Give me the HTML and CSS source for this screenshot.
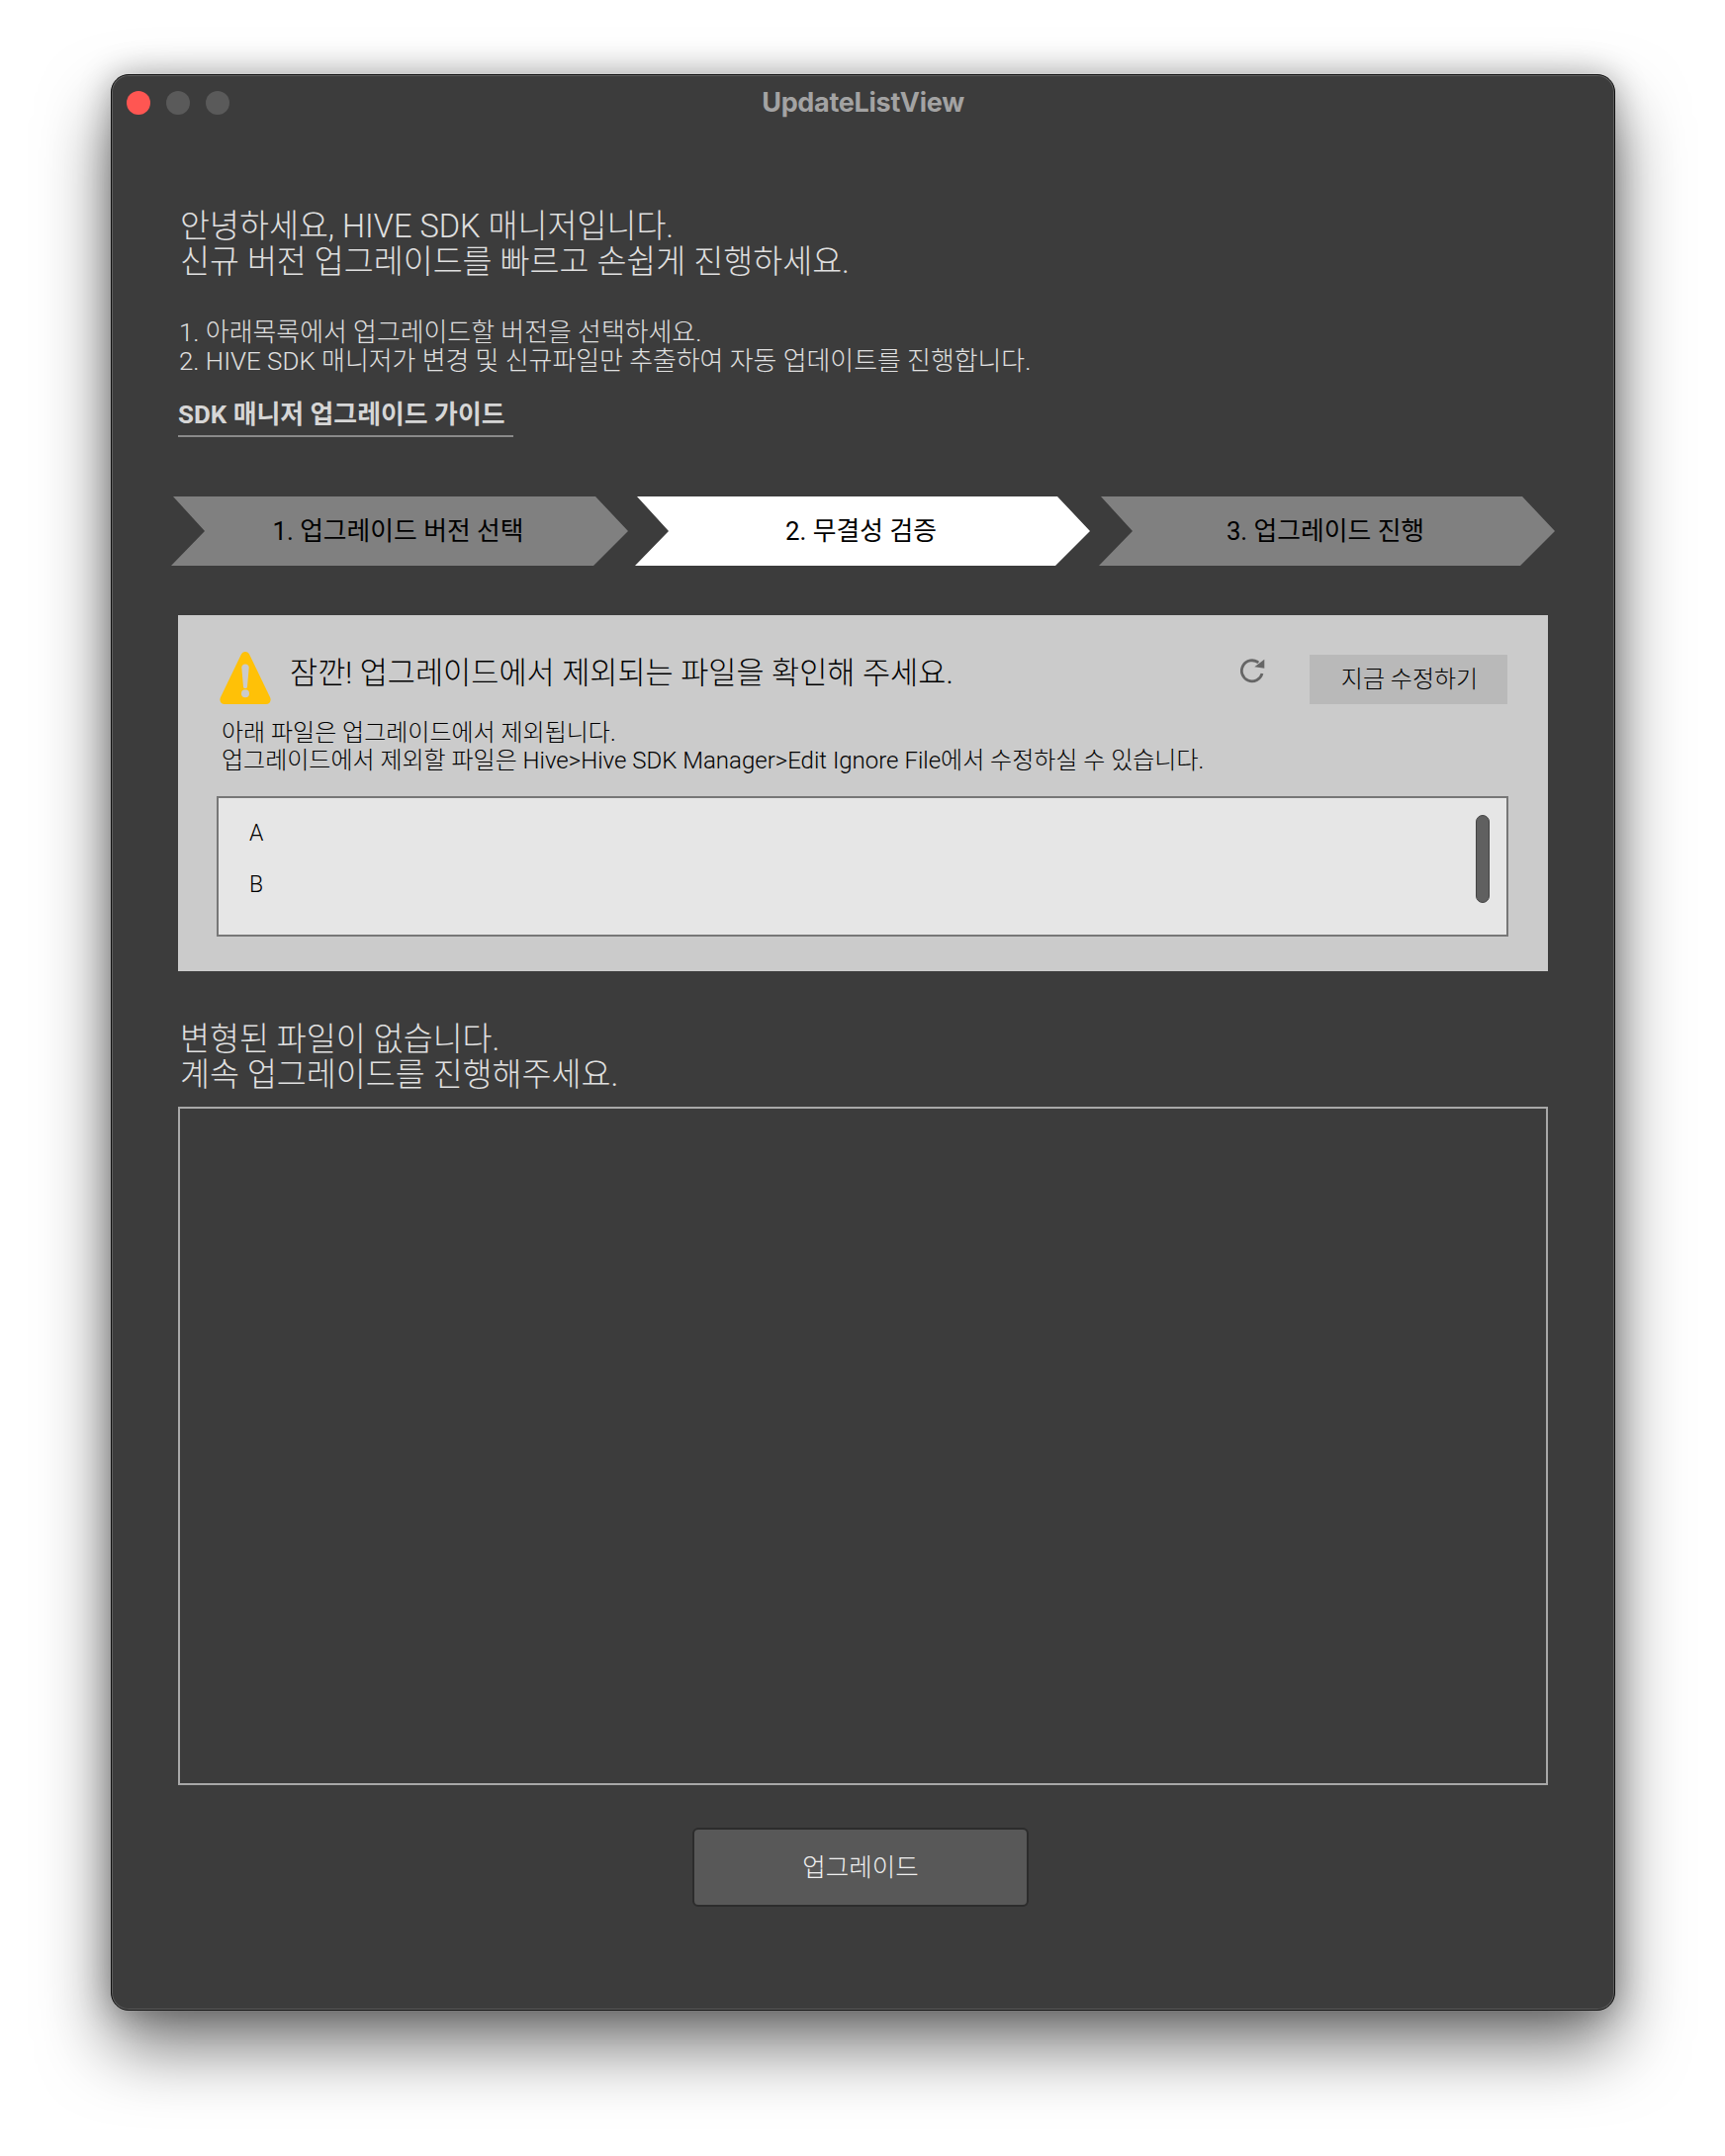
FILE: index.html
```html
<!DOCTYPE html>
<html lang="ko">
<head>
  <meta charset="UTF-8" />
  <title>UpdateListView</title>
  <link rel="stylesheet" href="styles.css">
</head>
<body>
  <div class="window">
    <div class="titlebar">
      <div class="lights">
        <span class="light red"></span>
        <span class="light"></span>
        <span class="light"></span>
      </div>
      <div class="title">UpdateListView</div>
    </div>

    <div class="content">
      <div class="heading">안녕하세요, HIVE SDK 매니저입니다.<br>신규 버전 업그레이드를 빠르고 손쉽게 진행하세요.</div>
      <div class="intro">1. 아래목록에서 업그레이드할 버전을 선택하세요.<br>2. HIVE SDK 매니저가 변경 및 신규파일만 추출하여 자동 업데이트를 진행합니다.</div>
      <div class="guide">SDK 매니저 업그레이드 가이드</div>

      <div class="steps">
        <div class="step">1. 업그레이드 버전 선택</div>
        <div class="step current">2. 무결성 검증</div>
        <div class="step last">3. 업그레이드 진행</div>
      </div>

      <div class="panel">
        <div class="panel-head">
          <svg class="warn-icon" width="52" height="53" viewBox="0 0 52 53">
            <path d="M26 0c2 0 3.400 1.200 4.300 3L51 46c1.600 3.400-.2 7-4 7H5c-3.800 0-5.600-3.600-4-7L21.700 3C22.600 1.200 24 0 26 0z" fill="#ffc107"/>
            <path d="M22.300 16c0-2.200 1.600-3.500 3.700-3.500s3.700 1.300 3.700 3.500L28 35.500c-.2 1-1 1.500-2 1.500s-1.800-.5-2-1.500z" fill="#cbcbcb"/>
            <circle cx="26" cy="42.200" r="4" fill="#cbcbcb"/>
          </svg>
          <div class="panel-title">잠깐! 업그레이드에서 제외되는 파일을 확인해 주세요.</div>
          <svg class="refresh-icon" width="26" height="26" viewBox="0 0 26 26">
            <path d="M18.300 5A10.500 10.500 0 1 0 22 16" fill="none" stroke="#666" stroke-width="2.800"/>
            <path d="M24.300 1.700v9l-10-1.400z" fill="#666"/>
          </svg>
          <div class="edit-btn">지금 수정하기</div>
        </div>
        <div class="panel-text">아래 파일은 업그레이드에서 제외됩니다.<br>업그레이드에서 제외할 파일은 Hive&gt;Hive SDK Manager&gt;Edit Ignore File에서 수정하실 수 있습니다.</div>
        <div class="file-list">
          <div class="file-row">A</div>
          <div class="file-row">B</div>
          <div class="scroll-thumb"></div>
        </div>
      </div>

      <div class="heading changed">변형된 파일이 없습니다.<br>계속 업그레이드를 진행해주세요.</div>
      <div class="changed-box"></div>
      <div class="upgrade-btn">업그레이드</div>
    </div>
  </div>
</body>
</html>
```

FILE: styles.css
```css
* {
  box-sizing: border-box;
  margin: 0;
  padding: 0;
  font-family: Roboto, "Noto Sans CJK KR", sans-serif;
}
body {
  background-color: #fff;
  height: 2180px;
  padding: 75px 0 0 112px;
  overflow: hidden;
}
.window {
  width: 1521px;
  height: 1958px;
  background: #3c3c3c;
  border: 1px solid #111;
  border-radius: 18px;
  box-shadow: inset 0 0 0 1px #5e5e5e, 0 36px 70px rgba(0, 0, 0, 0.55), 0 0 32px rgba(0, 0, 0, 0.28);
}
.titlebar {
  height: 54px;
  margin-bottom: 2px;
  position: relative;
  display: flex;
  align-items: center;
  justify-content: center;
}
.lights {
  position: absolute;
  left: 15px;
  top: 16px;
  display: flex;
  gap: 16px;
}
.light {
  width: 24px;
  height: 24px;
  border-radius: 50%;
  background: #5a5a5a;
}
.light.red {
  background: #ff5652;
}
.title {
  font-family: Inter, sans-serif;
  font-size: 27px;
  font-weight: 700;
  letter-spacing: -0.3px;
  color: #a3a3a3;
}
.content {
  padding: 78px 67px 0;
}
.heading {
  font-size: 32.600px;
  line-height: 36px;
  font-weight: 300;
  color: #e0e0e0;
  padding: 1px 0 0 2px;
}
.intro {
  margin-top: 38px;
  padding: 1px 0 0 1px;
  font-size: 25.900px;
  line-height: 29px;
  font-weight: 300;
  color: #e0e0e0;
}
.guide {
  width: fit-content;
  margin: 23px 0 0 0;
  padding: 0 8px 5px 0;
  font-size: 25.900px;
  line-height: 32px;
  font-weight: 700;
  color: #d6d6d6;
  border-bottom: 2px solid #8a8a8a;
}
.steps {
  display: flex;
  height: 70px;
  margin: 60px 0 0 -7px;
}
.step {
  flex: none;
  width: 462px;
  height: 70px;
  line-height: 70px;
  padding-right: 3px;
  text-align: center;
  font-size: 25.800px;
  color: #000;
  background: #808080;
  clip-path: polygon(2px 0, calc(100% - 33px) 0, 100% 50%, calc(100% - 35px) 100%, 0 100%, 34px 50%);
}
.step.current {
  width: 460px;
  margin-left: 7px;
  background: #fff;
}
.step.last {
  width: 461px;
  margin-left: 9px;
}
.panel {
  margin-top: 50px;
  height: 360px;
  padding: 38px 40px 0 39px;
  background: #cbcbcb;
}
.panel-head {
  display: flex;
  align-items: flex-start;
  height: 52px;
  margin: 0 1px 0 3px;
}
.warn-icon {
  flex: none;
  margin-top: -1px;
}
.panel-title {
  margin: 3px 0 0 19px;
  font-size: 30.600px;
  line-height: 36px;
  font-weight: 300;
  color: #000;
}
.refresh-icon {
  margin: 5px 0 0 auto;
}
.edit-btn {
  width: 200px;
  height: 50px;
  margin: 2px 0 0 44px;
  padding-left: 2px;
  background: #b9b9b9;
  text-align: center;
  font-size: 24px;
  line-height: 50px;
  font-weight: 300;
  color: #000;
}
.panel-text {
  margin: 16px 0 0 5px;
  font-size: 24px;
  line-height: 27.500px;
  font-weight: 300;
  color: #000;
}
.file-list {
  position: relative;
  height: 142px;
  margin-top: 22px;
  padding: 10px 0 0 31px;
  background: #e6e6e6;
  border: 2px solid #777;
}
.file-row {
  height: 52px;
  line-height: 52px;
  font-size: 23px;
  font-weight: 300;
  color: #000;
}
.scroll-thumb {
  position: absolute;
  right: 17px;
  top: 17px;
  width: 14px;
  height: 89px;
  background: #606060;
  border: 1.500px solid #444;
  border-radius: 7px;
}
.changed {
  margin-top: 50px;
}
.changed-box {
  height: 686px;
  margin-top: 14px;
  border: 2px solid #a8a8a8;
}
.upgrade-btn {
  width: 340px;
  height: 80px;
  margin: 43px 0 0 520px;
  background: #585858;
  border: 2px solid #2c2c2c;
  border-radius: 6px;
  text-align: center;
  font-size: 25.500px;
  line-height: 76px;
  font-weight: 300;
  color: #f0f0f0;
}
```
